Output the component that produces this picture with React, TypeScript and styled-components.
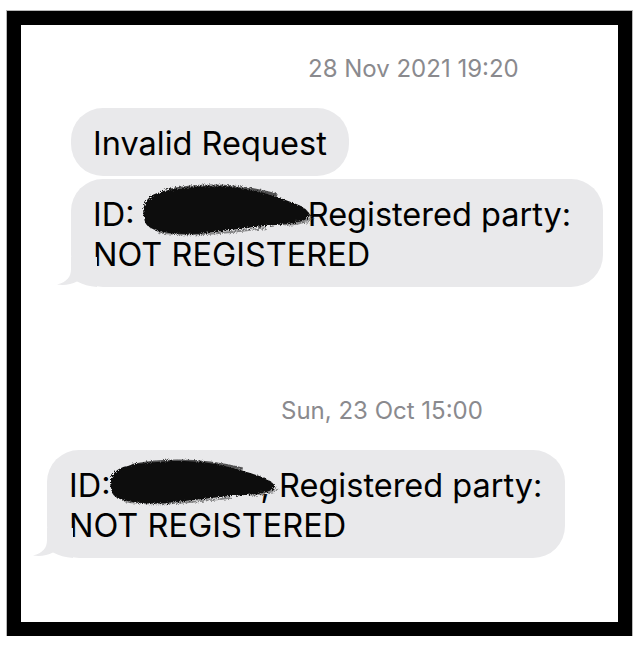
import React from 'react';
import styled, { createGlobalStyle } from 'styled-components';

const GlobalStyle = createGlobalStyle`
  html, body {
    margin: 0;
    padding: 0;
    background: #fff;
  }
  body {
    font-family: Inter, "Liberation Sans", Arial, sans-serif;
  }
`;

const Page = styled.div`
  padding: 11px 0 0 7px;
`;

const Frame = styled.div`
  box-sizing: border-box;
  width: 625px;
  height: 625px;
  border: 14px solid #000;
  box-shadow: 0 0 0 1px #b8b8b8;
  background: #fff;
  padding-top: 30px;
  display: flex;
  flex-direction: column;
`;

const Section = styled.div<{ $top: number }>`
  display: flex;
  flex-direction: column;
  align-items: flex-start;
  margin-top: ${(p) => p.$top}px;
`;

const Timestamp = styled.div<{ $indent: number }>`
  margin-left: ${(p) => p.$indent}px;
  margin-bottom: 25px;
  font-size: 24px;
  line-height: 28px;
  color: #8a8a8e;
  white-space: nowrap;
`;

const Bubble = styled.div<{ $indent: number; $width?: number }>`
  position: relative;
  box-sizing: border-box;
  margin-left: ${(p) => p.$indent}px;
  ${(p) => (p.$width ? `width: ${p.$width}px;` : '')}
  padding: 16px 22px 12px;
  background: #e9e9eb;
  border-radius: 32px;
  font-size: 32.5px;
  line-height: 40px;
  color: #000;
  white-space: nowrap;

  & + & {
    margin-top: 3px;
  }
`;

const Tail = styled.svg`
  position: absolute;
  left: -14px;
  bottom: 0;
  width: 40px;
  height: 30px;
`;

const Redacted = styled.span<{ $width: number }>`
  position: relative;
  display: inline-block;
  width: ${(p) => p.$width}px;
  height: 0;
`;

const Scribble = styled.svg<{ $above: number; $below: number; $spill: number }>`
  position: absolute;
  left: -4px;
  bottom: -${(p) => p.$below}px;
  width: calc(100% + ${(p) => p.$spill}px);
  height: ${(p) => p.$above + p.$below}px;
  overflow: visible;
`;

function BubbleTail() {
  return (
    <Tail viewBox="0 0 40 30">
      <path
        d="M14 0 L14 12 C14 20 10 25 0 27.5 C7 28.6 14 27.6 20 24.6 C26 27.6 32 29.6 40 30 L40 0 Z"
        fill="#e9e9eb"
      />
    </Tail>
  );
}

function Ink({
  width,
  above,
  below,
  spill,
  id,
}: {
  width: number;
  above: number;
  below: number;
  spill: number;
  id: string;
}) {
  return (
    <Redacted $width={width}>
      <Scribble
        $above={above}
        $below={below}
        $spill={spill}
        viewBox="0 0 180 52"
        preserveAspectRatio="none"
      >
        <defs>
          <filter id={id} x="-10%" y="-20%" width="120%" height="140%">
            <feTurbulence type="fractalNoise" baseFrequency="0.9" numOctaves="2" seed="3" />
            <feDisplacementMap in="SourceGraphic" scale="5" />
          </filter>
        </defs>
        <g filter={`url(#${id})`}>
          <path
            d="M4 32 C1 22 8 10 22 8 C30 4 36 6 45 4 C70 1 95 2 110 5 C128 8 142 13 156 18 C166 21 173 25 176 31 C172 38 160 40 140 41 C115 43 90 47 60 50 C35 51 15 48 8 42 C4 38 5 35 4 32 Z"
            fill="#0a0a0a"
          />
          <path d="M26 7 C60 0 100 0 142 11" stroke="#111" strokeWidth="3" fill="none" opacity="0.7" />
          <path d="M18 48 C50 53 90 49 130 44" stroke="#222" strokeWidth="2" fill="none" opacity="0.5" />
          <path d="M148 40 C160 42 168 39 179 33" stroke="#333" strokeWidth="2" fill="none" opacity="0.5" />
          <path d="M160 36 C166 37 170 41 174 38" stroke="#444" strokeWidth="1.5" fill="none" opacity="0.4" />
        </g>
      </Scribble>
    </Redacted>
  );
}

export default function App() {
  return (
    <>
      <GlobalStyle />
      <Page>
        <Frame>
          <Section $top={0}>
            <Timestamp $indent={287}>28 Nov 2021 19:20</Timestamp>
            <Bubble $indent={50}>Invalid Request</Bubble>
            <Bubble $indent={50} $width={532}>
              <BubbleTail />
              ID: <Ink id="ink1" width={164} above={42} below={10} spill={10} />Registered party:
              <br />
              NOT REGISTERED
            </Bubble>
          </Section>

          <Section $top={110}>
            <Timestamp $indent={260}>Sun, 23 Oct 15:00</Timestamp>
            <Bubble $indent={26} $width={518}>
              <BubbleTail />
              ID:<Ink id="ink2" width={150} above={38} below={8} spill={22} />, Registered party:
              <br />
              NOT REGISTERED
            </Bubble>
          </Section>
        </Frame>
      </Page>
    </>
  );
}
